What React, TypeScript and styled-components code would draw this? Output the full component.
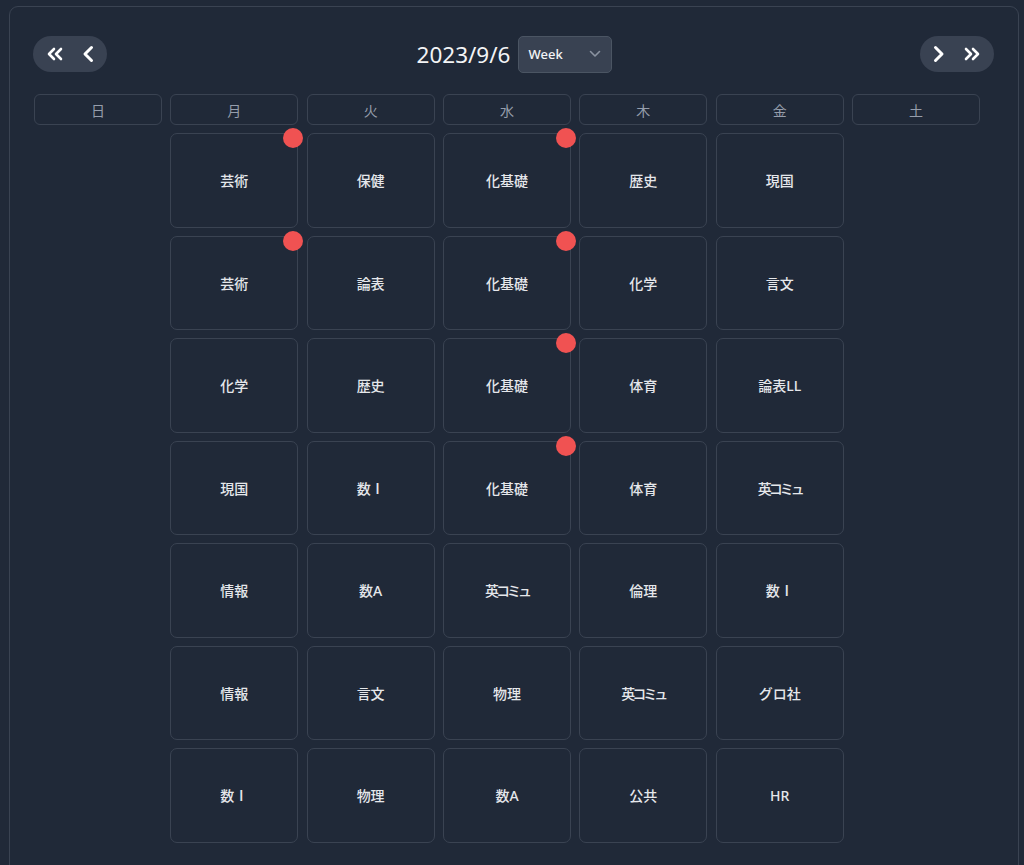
import React from "react";
import styled, { createGlobalStyle } from "styled-components";

const Global = createGlobalStyle`
  html, body { margin: 0; padding: 0; background: #202938; }
  body { font-family: "Noto Sans", "Noto Sans CJK JP", sans-serif; }
`;

const Page = styled.div`
  padding: 6px 5px 0 9px;
  height: 865px;
  box-sizing: border-box;
  overflow: hidden;
`;

const Panel = styled.div`
  border: 1px solid #3a4352;
  border-radius: 9px;
  padding: 29px 24px 40px 24px;
  min-height: 900px;
  box-sizing: border-box;
`;

const Header = styled.div`
  display: flex;
  align-items: center;
  justify-content: space-between;
  height: 36px;
  margin-left: -1px;
`;

const NavPill = styled.div`
  display: flex;
  align-items: center;
  gap: 16px;
  width: 74px;
  height: 36px;
  padding: 0 10px;
  justify-content: center;
  border-radius: 18px;
  background: #394252;
  box-sizing: border-box;
`;

const IconBtn = styled.button`
  background: none;
  border: none;
  padding: 0;
  display: flex;
  align-items: center;
  justify-content: center;
  cursor: pointer;
  color: #ffffff;
`;

const Center = styled.div`
  display: flex;
  align-items: center;
  gap: 8px;
  margin-left: 2px;
`;

const DateTitle = styled.span`
  font-family: "Noto Sans", sans-serif;
  font-size: 22.5px;
  color: #f3f4f6;
`;

const Select = styled.div`
  width: 94px;
  height: 37px;
  box-sizing: border-box;
  display: flex;
  align-items: center;
  justify-content: space-between;
  padding: 0 10px 0 9px;
  background: #394252;
  border: 1px solid #4b5563;
  border-radius: 5px;
  font-family: "Noto Sans", sans-serif;
  font-size: 13px;
  font-weight: 500;
  color: #f3f4f6;
`;

const Grid = styled.div`
  width: 946px;
  margin-top: 22px;
  display: grid;
  grid-template-columns: repeat(7, 1fr);
  column-gap: 8.5px;
  row-gap: 8px;
`;

const DayHead = styled.div`
  height: 31px;
  box-sizing: border-box;
  border: 1px solid #3a4352;
  border-radius: 6px;
  display: flex;
  align-items: center;
  justify-content: center;
  font-family: "Noto Sans CJK JP", sans-serif;
  font-size: 14px;
  color: #959dab;
`;

const Cell = styled.div<{ $tight?: boolean }>`
  position: relative;
  height: 94.5px;
  box-sizing: border-box;
  border: 1px solid #3a4352;
  border-radius: 7px;
  display: flex;
  align-items: center;
  justify-content: center;
  font-family: "Noto Sans", "Noto Sans CJK JP", sans-serif;
  font-size: 14px;
  font-weight: 500;
  color: #e5e7eb;
  letter-spacing: ${(p) => (p.$tight ? "-3px" : "0")};
`;

const Empty = styled.div`
  height: 94.5px;
`;

const Dot = styled.span`
  position: absolute;
  top: -6px;
  right: -6px;
  width: 20px;
  height: 20px;
  border-radius: 50%;
  background: #f05252;
`;

const Chevron = ({ dir, double }: { dir: "l" | "r"; double?: boolean }) => {
  const single = dir === "l" ? "M10.5 2.5 L4 9 L10.5 15.5" : "M3.5 2.5 L10 9 L3.5 15.5";
  if (!double) {
    return (
      <svg width="14" height="18" viewBox="0 0 14 18" fill="none">
        <path d={single} stroke="currentColor" strokeWidth="3" strokeLinecap="round" strokeLinejoin="round" />
      </svg>
    );
  }
  const a = dir === "l" ? "M9 4 L4 9 L9 14" : "M4 4 L9 9 L4 14";
  const b = dir === "l" ? "M16 4 L11 9 L16 14" : "M11 4 L16 9 L11 14";
  return (
    <svg width="20" height="18" viewBox="0 0 20 18" fill="none">
      <path d={a} stroke="currentColor" strokeWidth="2.6" strokeLinecap="round" strokeLinejoin="round" />
      <path d={b} stroke="currentColor" strokeWidth="2.6" strokeLinecap="round" strokeLinejoin="round" />
    </svg>
  );
};

const days = ["日", "月", "火", "水", "木", "金", "土"];

type Slot = { name: string; dot?: boolean };

const rows: Slot[][] = [
  [{ name: "芸術", dot: true }, { name: "保健" }, { name: "化基礎", dot: true }, { name: "歴史" }, { name: "現国" }],
  [{ name: "芸術", dot: true }, { name: "論表" }, { name: "化基礎", dot: true }, { name: "化学" }, { name: "言文" }],
  [{ name: "化学" }, { name: "歴史" }, { name: "化基礎", dot: true }, { name: "体育" }, { name: "論表LL" }],
  [{ name: "現国" }, { name: "数Ⅰ" }, { name: "化基礎", dot: true }, { name: "体育" }, { name: "英コミュ" }],
  [{ name: "情報" }, { name: "数A" }, { name: "英コミュ" }, { name: "倫理" }, { name: "数Ⅰ" }],
  [{ name: "情報" }, { name: "言文" }, { name: "物理" }, { name: "英コミュ" }, { name: "グロ社" }],
  [{ name: "数Ⅰ" }, { name: "物理" }, { name: "数A" }, { name: "公共" }, { name: "HR" }],
];

export default function App() {
  return (
    <>
      <Global />
      <Page>
        <Panel>
          <Header>
            <NavPill>
              <IconBtn aria-label="previous month"><Chevron dir="l" double /></IconBtn>
              <IconBtn aria-label="previous week"><Chevron dir="l" /></IconBtn>
            </NavPill>
            <Center>
              <DateTitle>2023/9/6</DateTitle>
              <Select>
                <span>Week</span>
                <svg width="12" height="8" viewBox="0 0 12 8" fill="none">
                  <path d="M1.5 1.5 L6 6 L10.5 1.5" stroke="#8b93a1" strokeWidth="1.6" strokeLinecap="round" strokeLinejoin="round" />
                </svg>
              </Select>
            </Center>
            <NavPill>
              <IconBtn aria-label="next week"><Chevron dir="r" /></IconBtn>
              <IconBtn aria-label="next month"><Chevron dir="r" double /></IconBtn>
            </NavPill>
          </Header>
          <Grid>
            {days.map((d) => (
              <DayHead key={d}>{d}</DayHead>
            ))}
            {rows.map((row, ri) => (
              <React.Fragment key={ri}>
                <Empty />
                {row.map((s, ci) => (
                  <Cell key={ci} $tight={s.name.includes("コミュ")}>
                    {s.name}
                    {s.dot && <Dot />}
                  </Cell>
                ))}
                <Empty />
              </React.Fragment>
            ))}
          </Grid>
        </Panel>
      </Page>
    </>
  );
}
